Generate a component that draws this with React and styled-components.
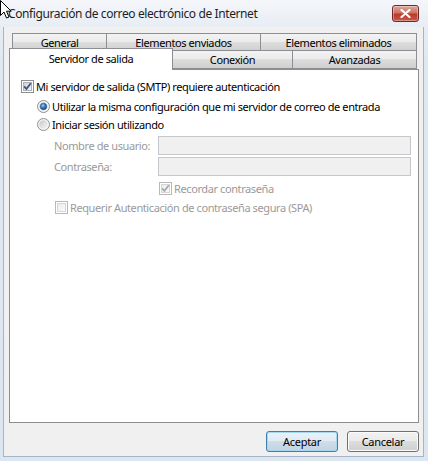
import React from 'react'
import styled, { createGlobalStyle } from 'styled-components'

const GlobalStyle = createGlobalStyle`
  html, body {
    margin: 0;
    padding: 0;
    background: #dde6f1;
  }
`

const uiFont = `"Noto Sans", "Open Sans", sans-serif`

export default function App() {
  return (
    <>
      <GlobalStyle />
      <Window>
        <TitleBar>
          <Title>Configuración de correo electrónico de Internet</Title>
          <CloseButton aria-label="Cerrar">
            <svg width="11" height="9" viewBox="0 0 11 9">
              <path d="M1.5 1 L9.5 8 M9.5 1 L1.5 8" stroke="#fff" strokeWidth="2.2" strokeLinecap="round" />
            </svg>
          </CloseButton>
          <Cursor width="12" height="19" viewBox="0 0 12 19">
            <path d="M0.5 0.5 L0.5 15.5 L4 12 L6.5 18 L9 17 L6.5 11.2 L11.2 11.2 Z" fill="#fff" stroke="#000" strokeWidth="1" />
          </Cursor>
        </TitleBar>

        <Client>
          <TabStrip>
            <TabRow $back>
              <Tab $w={95}>General</Tab>
              <Tab $w={155}>Elementos enviados</Tab>
              <Tab $w={157}>Elementos eliminados</Tab>
            </TabRow>
            <TabRow>
              <Tab $w={164} $active>Servidor de salida</Tab>
              <Tab $w={121}>Conexión</Tab>
              <Tab $w={125}>Avanzadas</Tab>
            </TabRow>
          </TabStrip>

          <Panel>
            <Row $top={7}>
              <CheckBox checked />
              <Label>Mi servidor de salida (SMTP) requiere autenticación</Label>
            </Row>
            <Row $top={2} $indent={16}>
              <Radio selected />
              <Label>Utilizar la misma configuración que mi servidor de correo de entrada</Label>
            </Row>
            <Row $top={0} $indent={16}>
              <Radio />
              <Label>Iniciar sesión utilizando</Label>
            </Row>
            <Row $top={3} $indent={33}>
              <FieldLabel>Nombre de usuario:</FieldLabel>
              <TextBox disabled />
            </Row>
            <Row $top={3} $indent={33}>
              <FieldLabel>Contraseña:</FieldLabel>
              <TextBox disabled />
            </Row>
            <Row $top={4} $indent={138}>
              <CheckBox checked disabled />
              <Label $disabled>Recordar contraseña</Label>
            </Row>
            <Row $top={1} $indent={34}>
              <CheckBox disabled />
              <Label $disabled>Requerir Autenticación de contraseña segura (SPA)</Label>
            </Row>
          </Panel>

          <Footer>
            <Button $default>Aceptar</Button>
            <Button>Cancelar</Button>
          </Footer>
        </Client>
      </Window>
    </>
  )
}

function CheckBox({ checked, disabled }) {
  const border = disabled ? '#b8b8b8' : '#8e8f8f'
  const mark = disabled ? '#a8a8a8' : '#3c4f8c'
  return (
    <Box>
      <svg width="13" height="13" viewBox="0 0 13 13">
        <defs>
          <linearGradient id={disabled ? 'cbd' : 'cbe'} x1="0" y1="0" x2="1" y2="1">
            <stop offset="0" stopColor={disabled ? '#ececec' : '#cbcfd5'} />
            <stop offset="1" stopColor={disabled ? '#fbfbfb' : '#f6f6f6'} />
          </linearGradient>
        </defs>
        <rect x="0.5" y="0.5" width="12" height="12" fill="#fff" stroke={border} />
        <rect x="2.5" y="2.5" width="8" height="8" fill={`url(#${disabled ? 'cbd' : 'cbe'})`} stroke={disabled ? '#d6d6d6' : '#aeb3b9'} strokeWidth="1" />
        {checked && (
          <path d="M3.2 6.4 L5.4 9 L9.8 3.2" fill="none" stroke={mark} strokeWidth="1.8" strokeLinejoin="round" />
        )}
      </svg>
    </Box>
  )
}

function Radio({ selected }) {
  return (
    <Box>
      <svg width="13" height="13" viewBox="0 0 13 13">
        <defs>
          <linearGradient id="rdo" x1="0" y1="0" x2="1" y2="1">
            <stop offset="0" stopColor="#c3c7cc" />
            <stop offset="1" stopColor="#f8f8f8" />
          </linearGradient>
          <radialGradient id="rdot" cx="0.4" cy="0.35" r="0.7">
            <stop offset="0" stopColor="#9fd1f7" />
            <stop offset="0.5" stopColor="#2f7bc6" />
            <stop offset="1" stopColor="#173f7a" />
          </radialGradient>
        </defs>
        <circle cx="6.5" cy="6.5" r="6" fill="#f4f4f4" stroke="#8e8f8f" />
        <circle cx="6.5" cy="6.5" r="4.3" fill="url(#rdo)" />
        {selected && <circle cx="6.5" cy="6.5" r="3.2" fill="url(#rdot)" stroke="#1d4b85" strokeWidth="0.6" />}
      </svg>
    </Box>
  )
}

const Window = styled.div`
  position: relative;
  width: 428px;
  height: 461px;
  display: flex;
  flex-direction: column;
  background: linear-gradient(#eef2f7, #dfe7f1 60px, #dce6f2);
  font-family: ${uiFont};
  font-size: 11px;
  letter-spacing: -0.4px;
  color: #000;
  overflow: hidden;
`

const TitleBar = styled.div`
  height: 27px;
  display: flex;
  align-items: center;
  padding: 0 9px 0 8px;
  box-sizing: border-box;
  background: linear-gradient(#f4f6fa, #e8edf4);
`

const Title = styled.div`
  flex: 1;
  font-size: 12px;
  letter-spacing: -0.4px;
  color: #1e1e1e;
  margin-top: -1px;
  white-space: nowrap;
`

const CloseButton = styled.div`
  width: 25px;
  height: 15px;
  display: flex;
  align-items: center;
  justify-content: center;
  border: 1px solid #6d2a27;
  border-radius: 3px;
  background: linear-gradient(#e0a69b, #cf7464 45%, #bb3a2a 55%, #c9584a);
  box-shadow: inset 0 0 0 1px rgba(255, 255, 255, 0.35);
`

const Cursor = styled.svg`
  position: absolute;
  left: 0;
  top: 0;
`

const Client = styled.div`
  flex: 1;
  display: flex;
  flex-direction: column;
  margin: 0 4px 4px 3px;
  padding: 6px 4px 0 5px;
  background: #f0f0f0;
  border: 1px solid #a7b4c6;
  border-top: none;
`

const TabStrip = styled.div`
  display: flex;
  flex-direction: column;
`

const TabRow = styled.div`
  display: flex;
  align-items: flex-start;
  height: ${(p) => (p.$back ? '17px' : '20px')};
  padding-left: ${(p) => (p.$back ? '3px' : '0')};
  margin-bottom: ${(p) => (p.$back ? '0' : '-1px')};
`

const Tab = styled.div`
  width: ${(p) => p.$w}px;
  height: ${(p) => (p.$active ? '22px' : p.$back ? '17px' : '19px')};
  margin-top: ${(p) => (p.$active ? '-2px' : '0')};
  box-sizing: border-box;
  display: flex;
  justify-content: center;
  align-items: center;
  padding-bottom: ${(p) => (p.$active ? '3px' : '0')};
  border: 1px solid #8c8e94;
  border-bottom: ${(p) => (p.$active ? 'none' : '1px solid #8c8e94')};
  background: ${(p) => (p.$active ? '#fff' : 'linear-gradient(#f3f3f3, #ebebeb 45%, #dddddd 50%, #cfcfcf)')};
  position: ${(p) => (p.$active ? 'relative' : 'static')};
  z-index: ${(p) => (p.$active ? 1 : 'auto')};
  & + & {
    margin-left: -1px;
  }
`

const Panel = styled.div`
  height: 354px;
  box-sizing: border-box;
  border: 1px solid #8c8e94;
  background: #fff;
  padding: 7px 0 0 11px;
  display: flex;
  flex-direction: column;
`

const Row = styled.div`
  display: flex;
  align-items: center;
  height: 18px;
  margin-top: ${(p) => p.$top}px;
  padding-left: ${(p) => p.$indent || 0}px;
  &:first-child {
    margin-top: 0;
  }
`

const Box = styled.div`
  width: 13px;
  height: 13px;
  display: flex;
  margin-right: 2px;
`

const Label = styled.span`
  color: ${(p) => (p.$disabled ? '#9a9a9a' : '#000')};
  white-space: nowrap;
`

const FieldLabel = styled.span`
  width: 104px;
  color: #9a9a9a;
  white-space: nowrap;
`

const TextBox = styled.input`
  width: 253px;
  height: 19px;
  box-sizing: border-box;
  margin: 0;
  border: 1px solid #c4c8cd;
  background: #f0f0f0;
`

const Footer = styled.div`
  display: flex;
  justify-content: flex-end;
  gap: 9px;
  padding-top: 8px;
`

const Button = styled.button`
  width: 72px;
  height: 21px;
  box-sizing: border-box;
  font-family: ${uiFont};
  font-size: 11px;
  letter-spacing: -0.3px;
  color: #000;
  border-radius: 3px;
  padding: 0;
  border: 1px solid ${(p) => (p.$default ? '#3c7fb1' : '#707070')};
  background: ${(p) =>
    p.$default
      ? 'linear-gradient(#eaf2f8, #e1ebf3 45%, #cfdde9 50%, #c2d3e2)'
      : 'linear-gradient(#f2f2f2, #ebebeb 45%, #dddddd 50%, #cfcfcf)'};
  box-shadow: inset 0 0 0 1px ${(p) => (p.$default ? '#a8d8f0' : '#fcfcfc')};
`
